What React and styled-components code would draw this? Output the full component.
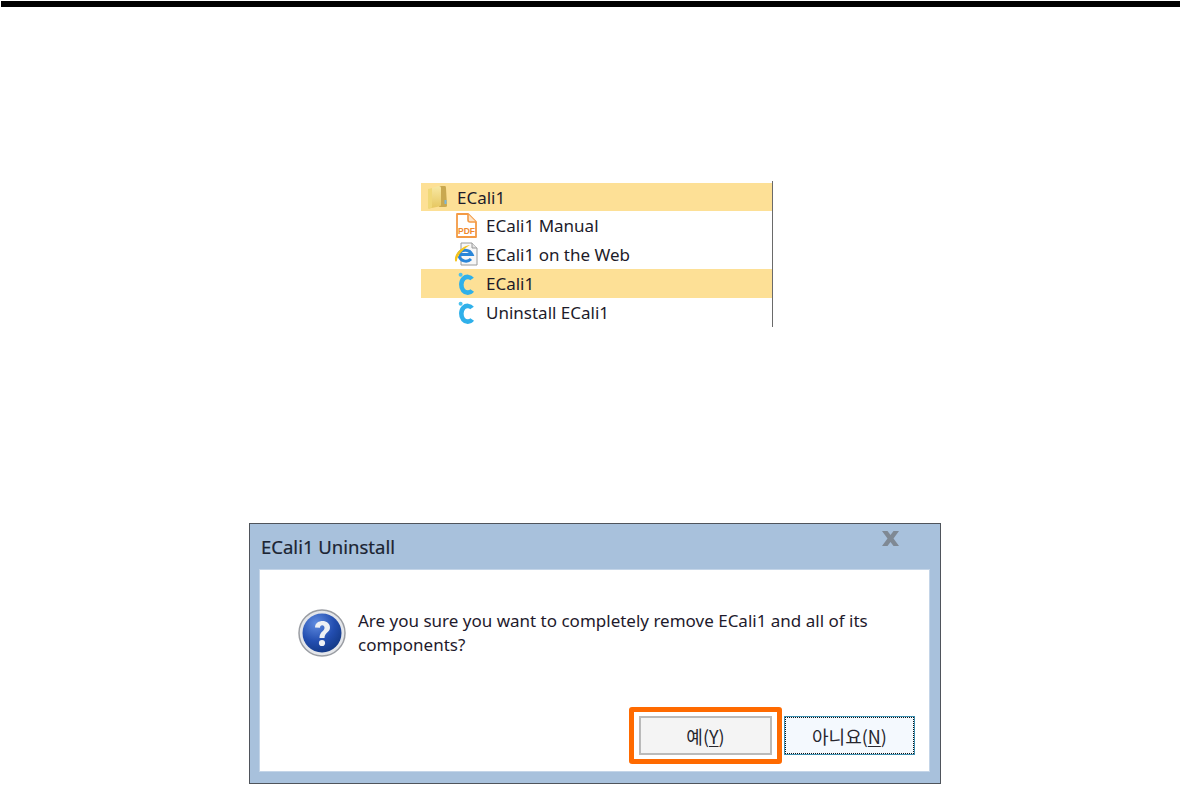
import React from 'react'
import styled, { createGlobalStyle } from 'styled-components'

const Global = createGlobalStyle`
  html, body {
    margin: 0;
    padding: 0;
    background: #fff;
  }
  body {
    font-family: "Noto Sans", "Noto Sans CJK KR", sans-serif;
    color: #1c2230;
  }
`

const Page = styled.div`
  width: 1182px;
  height: 785px;
  overflow: hidden;
  display: flex;
  flex-direction: column;
`

const TopRule = styled.div`
  height: 6px;
  margin: 1px 2px 0 1px;
  background: #000;
`

const Menu = styled.div`
  width: 351px;
  margin: 174px 0 0 421px;
  padding-top: 2px;
  border-right: 1px solid #6a6a6a;
`

const MenuRow = styled.div`
  height: ${p => p.$height || 29}px;
  display: flex;
  align-items: center;
  padding-left: ${p => p.$indent}px;
  gap: ${p => p.$gap}px;
  background: ${p => (p.$active ? '#fde096' : 'transparent')};
  font-size: 17px;
  color: #1d1b2a;
`

const IconSlot = styled.span`
  width: ${p => p.$width}px;
  height: 26px;
  display: flex;
  align-items: center;
  justify-content: center;
  flex: none;
`

const Dialog = styled.div`
  width: 690px;
  height: 259px;
  margin: 196px 0 0 249px;
  border: 1px solid #4f545b;
  background: #a8c1dc;
  display: flex;
  flex-direction: column;
`

const TitleBar = styled.div`
  height: 45px;
  flex: none;
  display: flex;
  align-items: center;
  justify-content: space-between;
  padding: 0 41px 0 11px;
`

const Title = styled.div`
  font-size: 18.5px;
  color: #1b2433;
  -webkit-text-stroke: 0.2px #1b2433;
`

const CloseMark = styled.svg`
  width: 17px;
  height: 15px;
  margin-top: -16px;
`

const Body = styled.div`
  flex: 1;
  margin: 0 10px 11px 9px;
  background: #fff;
  border: 1px solid #c4d5e8;
  display: flex;
  flex-direction: column;
`

const Message = styled.div`
  display: flex;
  gap: 12px;
  padding: 39px 40px 0 38px;
`

const Text = styled.p`
  margin: 0;
  width: 525px;
  font-size: 17px;
  line-height: 24px;
  color: #1e1a2c;
`

const Actions = styled.div`
  margin-top: auto;
  padding: 0 14px 7px 0;
  display: flex;
  justify-content: flex-end;
  align-items: center;
  gap: 2px;
`

const Highlight = styled.div`
  box-sizing: border-box;
  width: 153px;
  height: 57px;
  padding: 4px 5px;
  border: 5px solid #ff6a00;
  border-radius: 3px;
  background: #fff;
`

const Button = styled.div`
  box-sizing: border-box;
  width: ${p => p.$width}px;
  height: 39px;
  display: flex;
  align-items: center;
  justify-content: center;
  font-family: "Noto Sans CJK KR", "Noto Sans", sans-serif;
  font-size: 18px;
  color: #26262e;
  background: ${p => (p.$focused ? '#f4f9fe' : '#f4f4f4')};
  border: ${p => (p.$focused ? '1px solid #3c8fb0' : '2px solid #bababa')};
  outline: ${p => (p.$focused ? '1px dotted #111' : 'none')};
  outline-offset: -2px;
  u {
    text-underline-offset: 2px;
  }
`

function FolderIcon() {
  return (
    <svg width="21" height="24" viewBox="0 0 21 24">
      <defs>
        <linearGradient id="leaf" x1="0" y1="0" x2="0" y2="1">
          <stop offset="0" stopColor="#f8e8a4" />
          <stop offset="1" stopColor="#e6c65e" />
        </linearGradient>
      </defs>
      <path d="M12 1 H18 Q19 1 19 3 L20 21 Q20 22 18 22 H12 Z" fill="#c9a850" />
      <path d="M1 4 L12 1 Q14 1 14 3 V20 Q14 21 12 21.5 L2 23.5 Q1 23.5 1 22 Z" fill="url(#leaf)" />
      <path d="M1 4 L5 3 V22.6 L2 23.5 Q1 23.5 1 22 Z" fill="#f0d878" />
      <rect x="17.5" y="15" width="2" height="4" fill="#7ab6dc" />
    </svg>
  )
}

function PdfIcon() {
  return (
    <svg width="21" height="25" viewBox="0 0 21 25">
      <path
        d="M1 1 H12 L20 9 V24 H1 Z"
        fill="#fff"
        stroke="#f39a45"
        strokeWidth="1.8"
        strokeLinejoin="round"
      />
      <path d="M12 1 V7 Q12 9 14 9 H20" fill="#fde3c6" stroke="#f39a45" strokeWidth="1.6" />
      <text
        x="10.5"
        y="20.5"
        fontFamily="Liberation Sans, sans-serif"
        fontSize="8.5"
        fontWeight="700"
        textAnchor="middle"
        fill="#f08a2c"
      >
        PDF
      </text>
    </svg>
  )
}

function WebIcon() {
  return (
    <svg width="25" height="25" viewBox="0 0 25 25">
      <path d="M7 1 H18 L23 6 V23 H7 Z" fill="#f7f7f7" stroke="#9a9a9a" strokeWidth="1" />
      <path d="M18 1 V6 H23" fill="#e4e4e4" stroke="#9a9a9a" strokeWidth="1" />
      <path
        d="M4.5 12 A7.5 7 0 0 1 18 12.5 H5 M5 14 A7 6.5 0 0 0 17 17"
        fill="none"
        stroke="#2a86d8"
        strokeWidth="3"
      />
      <path
        d="M1 18 C0 12 8 4 16 3 C11 6 4 12 3 18 C3 20 1 20 1 18 Z"
        fill="#f4c21c"
      />
    </svg>
  )
}

function AppIcon() {
  return (
    <svg width="18" height="26" viewBox="0 0 18 26">
      <path
        d="M15 8 C13.2 5.5 9 5.2 6.8 7.4 C3.6 10.4 3.6 16.5 6.2 19.5 C8.6 22.4 13.2 22.2 15.2 19.5"
        fill="none"
        stroke="#2fb0ea"
        strokeWidth="4.6"
      />
      <circle cx="3.6" cy="3.8" r="2" fill="#4cc2ee" />
    </svg>
  )
}

function QuestionIcon() {
  return (
    <svg width="48" height="48" viewBox="0 0 48 48">
      <defs>
        <radialGradient id="orb" cx="35%" cy="25%" r="85%">
          <stop offset="0" stopColor="#5f8be0" />
          <stop offset="0.55" stopColor="#234eb0" />
          <stop offset="1" stopColor="#10357f" />
        </radialGradient>
      </defs>
      <circle cx="24" cy="24" r="23" fill="#e4e6ea" stroke="#9a9da3" strokeWidth="1.5" />
      <circle cx="24" cy="24" r="19.5" fill="url(#orb)" />
      <path
        d="M17 18.5 C17 14 21 12 24.5 12 C28.5 12 32 14.5 32 18.5 C32 23.5 26.5 23.5 26.5 29 H21.5 C21.5 22.5 26.5 22.5 26.5 18.8 C26.5 17 25.5 16.2 24.2 16.2 C22.8 16.2 22 17.2 22 18.8 Z"
        fill="#eef0f4"
      />
      <circle cx="24" cy="34" r="3.1" fill="#eef0f4" />
    </svg>
  )
}

export default function App() {
  return (
    <Page>
      <Global />
      <TopRule />
      <Menu>
        <MenuRow $active $height={28} $indent={6} $gap={9}>
          <IconSlot $width={21}><FolderIcon /></IconSlot>
          ECali1
        </MenuRow>
        <MenuRow $indent={35} $gap={9}>
          <IconSlot $width={21}><PdfIcon /></IconSlot>
          ECali1 Manual
        </MenuRow>
        <MenuRow $indent={33} $gap={7}>
          <IconSlot $width={25}><WebIcon /></IconSlot>
          ECali1 on the Web
        </MenuRow>
        <MenuRow $active $indent={35} $gap={11}>
          <IconSlot $width={19}><AppIcon /></IconSlot>
          ECali1
        </MenuRow>
        <MenuRow $indent={35} $gap={11}>
          <IconSlot $width={19}><AppIcon /></IconSlot>
          Uninstall ECali1
        </MenuRow>
      </Menu>
      <Dialog>
        <TitleBar>
          <Title>ECali1 Uninstall</Title>
          <CloseMark viewBox="0 0 17 15">
            <path
              d="M0 0 H5.5 L8.5 4 L11.5 0 H17 L11.5 7.5 L17 15 H11.5 L8.5 11 L5.5 15 H0 L5.5 7.5 Z"
              fill="#7f8994"
            />
          </CloseMark>
        </TitleBar>
        <Body>
          <Message>
            <QuestionIcon />
            <Text>
              Are you sure you want to completely remove ECali1 and all of its components?
            </Text>
          </Message>
          <Actions>
            <Highlight>
              <Button $width={133}>예(<u>Y</u>)</Button>
            </Highlight>
            <Button $focused $width={131}>아니요(<u>N</u>)</Button>
          </Actions>
        </Body>
      </Dialog>
    </Page>
  )
}
